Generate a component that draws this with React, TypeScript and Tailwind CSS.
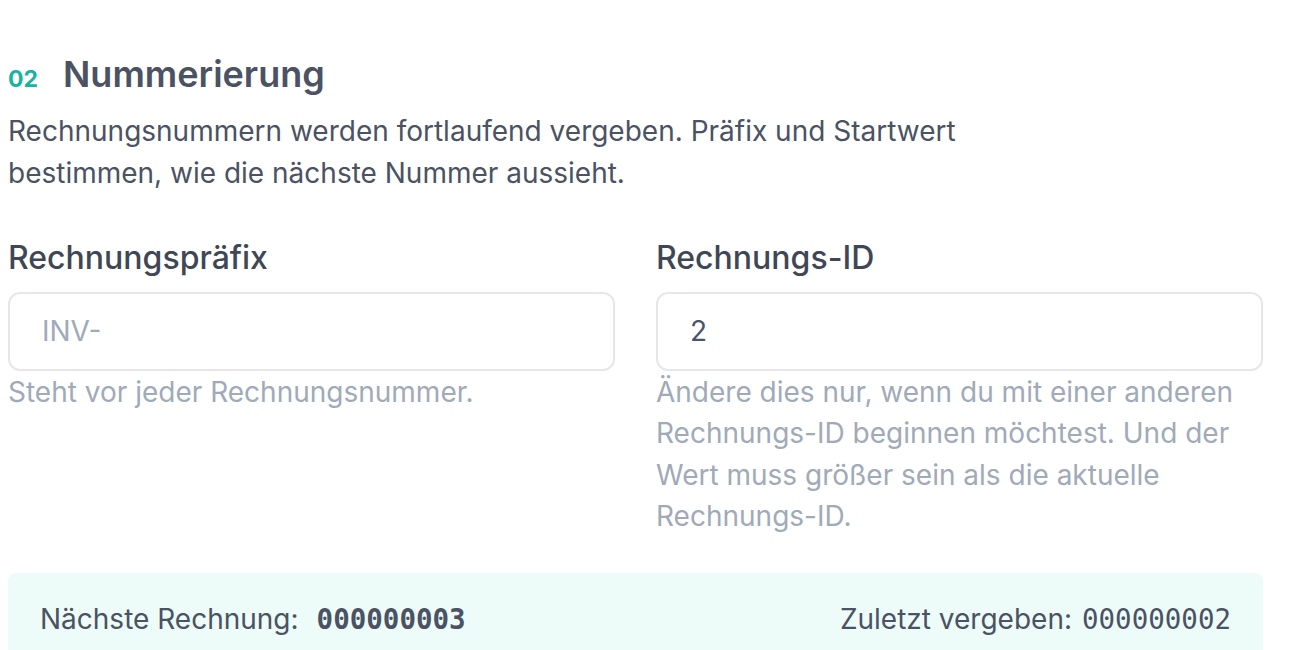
const sans = "font-['Inter',_'Noto_Sans',_sans-serif]";

function Field({
  label,
  value,
  placeholder,
  hint,
}: {
  label: string;
  value?: string;
  placeholder?: string;
  hint: string;
}) {
  return (
    <div className="flex flex-col">
      <label className="text-[32px] leading-[40px] font-medium text-[#3f4756]">{label}</label>
      <input
        readOnly
        value={value ?? ""}
        placeholder={placeholder}
        className="mt-[14px] h-[79px] w-full rounded-xl border-2 border-[#e5e7eb] bg-white px-[32px] text-[28px] text-[#475569] placeholder:text-[#a0aab8] outline-none"
      />
      <p className="mt-px text-[28px] leading-[41.5px] text-[#a0aab8]">{hint}</p>
    </div>
  );
}

export default function App() {
  return (
    <div className={`${sans} min-h-screen bg-white overflow-hidden`}>
      <section className="ml-2 w-[1255px] pt-[52px]">
        <div className="flex items-baseline gap-[25px]">
          <span className="text-[23px] font-bold text-[#17b3a3]">02</span>
          <h2 className="text-[36px] leading-[44px] font-semibold text-[#4a5263]">Nummerierung</h2>
        </div>
        <p className="mt-[13px] max-w-[990px] text-[28px] leading-[42px] text-[#4a5263]">
          Rechnungsnummern werden fortlaufend vergeben. Präfix und Startwert bestimmen, wie die
          nächste Nummer aussieht.
        </p>

        <div className="mt-[44px] grid grid-cols-2 gap-[41px]">
          <Field label="Rechnungspräfix" placeholder="INV-" hint="Steht vor jeder Rechnungsnummer." />
          <Field
            label="Rechnungs-ID"
            value="2"
            hint="Ändere dies nur, wenn du mit einer anderen Rechnungs-ID beginnen möchtest. Und der Wert muss größer sein als die aktuelle Rechnungs-ID."
          />
        </div>

        <div className="mt-[35px] flex items-center justify-between rounded-lg bg-[#edfcf9] px-8 pt-[28px] pb-[40px] text-[28px] leading-[36px] text-[#4a5263]">
          <div className="flex items-center gap-[18px]">
            <span>Nächste Rechnung:</span>
            <span className="font-['DejaVu_Sans_Mono',_monospace] text-[27.5px] font-bold">000000003</span>
          </div>
          <div className="flex items-center gap-[10px]">
            <span>Zuletzt vergeben:</span>
            <span className="font-['DejaVu_Sans_Mono',_monospace] text-[27.5px]">000000002</span>
          </div>
        </div>
      </section>
    </div>
  );
}
